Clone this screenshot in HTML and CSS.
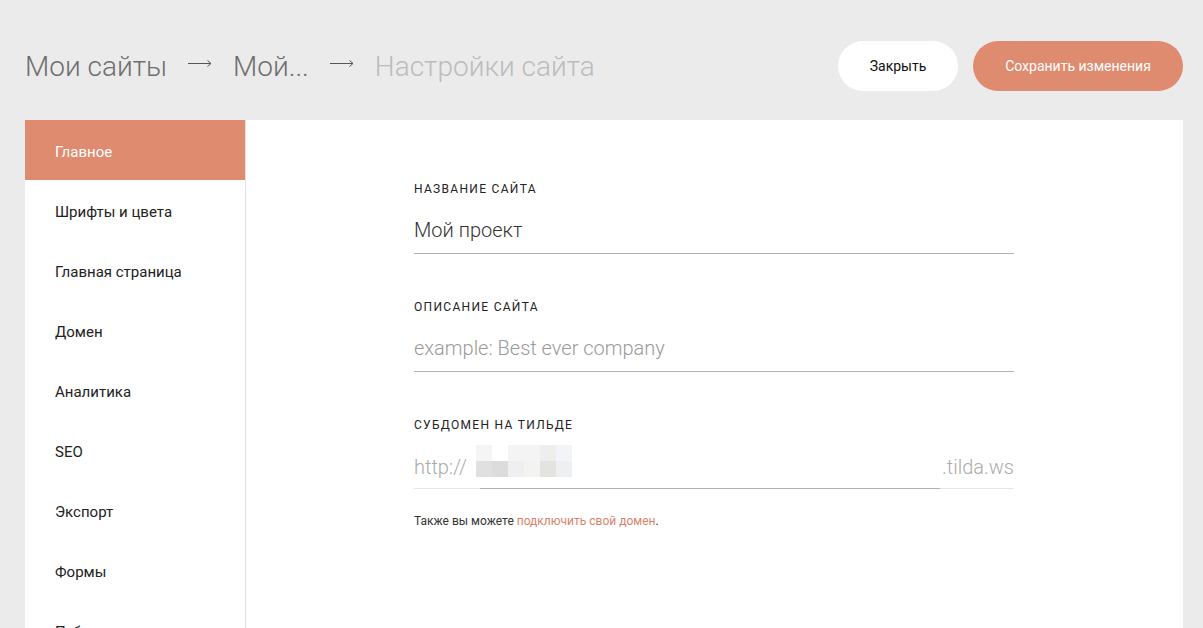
FILE: index.html
```html
<!DOCTYPE html>
<html lang="ru">
<head>
    <meta charset="UTF-8">
    <meta name="viewport" content="width=device-width, initial-scale=1.0">
    <title>Настройки сайта</title>
    <link rel="stylesheet" href="styles.css">
</head>
<body>
    <div class="header">
        <div class="crumbs">
            <span class="crumb">Мои сайты</span>
            <svg class="arrow" width="24" height="10" viewBox="0 0 24 10"><path d="M0 5.5H23M19.5 2.5L23 5.5L19.5 8.5" fill="none" stroke="#555" stroke-width="1"/></svg>
            <span class="crumb">Мой...</span>
            <svg class="arrow" width="24" height="10" viewBox="0 0 24 10"><path d="M0 5.5H23M19.5 2.5L23 5.5L19.5 8.5" fill="none" stroke="#555" stroke-width="1"/></svg>
            <span class="crumb current">Настройки сайта</span>
        </div>
        <div class="actions">
            <button class="btn btn-close">Закрыть</button>
            <button class="btn btn-save">Сохранить изменения</button>
        </div>
    </div>

    <div class="card">
        <ul class="menu">
            <li class="menu-item active">Главное</li>
            <li class="menu-item">Шрифты и цвета</li>
            <li class="menu-item">Главная страница</li>
            <li class="menu-item">Домен</li>
            <li class="menu-item">Аналитика</li>
            <li class="menu-item">SEO</li>
            <li class="menu-item">Экспорт</li>
            <li class="menu-item">Формы</li>
            <li class="menu-item">Публикация</li>
        </ul>

        <div class="content">
            <div class="field">
                <div class="label">Название сайта</div>
                <div class="input">Мой проект</div>
            </div>
            <div class="field">
                <div class="label">Описание сайта</div>
                <div class="input placeholder">example: Best ever company</div>
            </div>
            <div class="field">
                <div class="label">Субдомен на Тильде</div>
                <div class="subdomain">
                    <span class="prefix">http://</span>
                    <div class="sub-input">
                        <div class="blur">
                            <i style="background:#f5f5f5"></i><i style="background:#fff"></i><i style="background:#f4f4f4"></i><i style="background:#f4f4f4"></i><i style="background:#eeeeec"></i><i style="background:#f3f4f7"></i>
                            <i style="background:#e0e0e0"></i><i style="background:#dcdcdc"></i><i style="background:#efeff1"></i><i style="background:#f3f3f1"></i><i style="background:#e3e4e0"></i><i style="background:#eeeff1"></i>
                        </div>
                    </div>
                    <span class="suffix">.tilda.ws</span>
                </div>
            </div>
            <p class="note">Также вы можете <a href="#">подключить свой домен</a>.</p>
        </div>
    </div>
</body>
</html>
```

FILE: styles.css
```css
body {
    margin: 0;
    background-color: #ebebeb;
    font-family: Roboto, "Noto Sans", sans-serif;
    color: #222;
    height: 628px;
    overflow: hidden;
}

.header {
    display: flex;
    justify-content: space-between;
    align-items: center;
    padding: 41px 20px 29px 25px;
}

.crumbs {
    display: flex;
    align-items: center;
    gap: 21px;
    font-size: 28px;
    font-weight: 300;
}

.crumb {
    color: #6f6f6f;
}

.crumb.current {
    color: #bcbcbc;
}

.arrow {
    margin-top: -6px;
}

.actions {
    display: flex;
    gap: 15px;
}

.btn {
    height: 50px;
    border: none;
    border-radius: 25px;
    font-family: inherit;
    font-size: 14px;
    cursor: pointer;
}

.btn-close {
    width: 120px;
    background-color: #fff;
    color: #111;
}

.btn-save {
    width: 210px;
    background-color: #de8b70;
    color: #fff;
}

.card {
    display: flex;
    margin: 0 20px 0 25px;
    background-color: #fff;
    min-height: 520px;
}

.menu {
    list-style: none;
    margin: 0;
    padding: 0;
    width: 220px;
    border-right: 1px solid #e2e2e2;
}

.menu-item {
    height: 60px;
    box-sizing: border-box;
    padding: 4px 0 0 30px;
    line-height: 56px;
    font-size: 15px;
    color: #222;
}

.menu-item.active {
    background-color: #de8b70;
    color: #fff;
}

.content {
    padding: 61px 0 0 168px;
    width: 600px;
}

.field {
    margin-bottom: 45px;
}

.field:last-of-type {
    margin-bottom: 25px;
}

.label {
    font-size: 12px;
    line-height: 16px;
    text-transform: uppercase;
    letter-spacing: 1.3px;
    color: #222;
    margin-bottom: 12px;
}

.input {
    height: 44px;
    line-height: 43px;
    font-size: 20px;
    font-weight: 300;
    color: #333;
    border-bottom: 1px solid #b0b0b0;
}

.input.placeholder {
    color: #9a9a9a;
}

.subdomain {
    display: flex;
    height: 44px;
    font-size: 20px;
    font-weight: 300;
    color: #ababab;
}

.prefix,
.suffix {
    line-height: 44px;
    border-bottom: 1px solid #e6e6e6;
}

.prefix {
    width: 66px;
}

.suffix {
    width: 74px;
    text-align: right;
}

.sub-input {
    flex: 1;
    border-bottom: 1px solid #b0b0b0;
}

.blur {
    display: grid;
    grid-template-columns: repeat(6, 16px);
    grid-auto-rows: 16px;
    margin-left: -4px;
}

.note {
    margin: 0;
    font-size: 12px;
    color: #333;
}

.note a {
    color: #d9826a;
    text-decoration: none;
}
```
